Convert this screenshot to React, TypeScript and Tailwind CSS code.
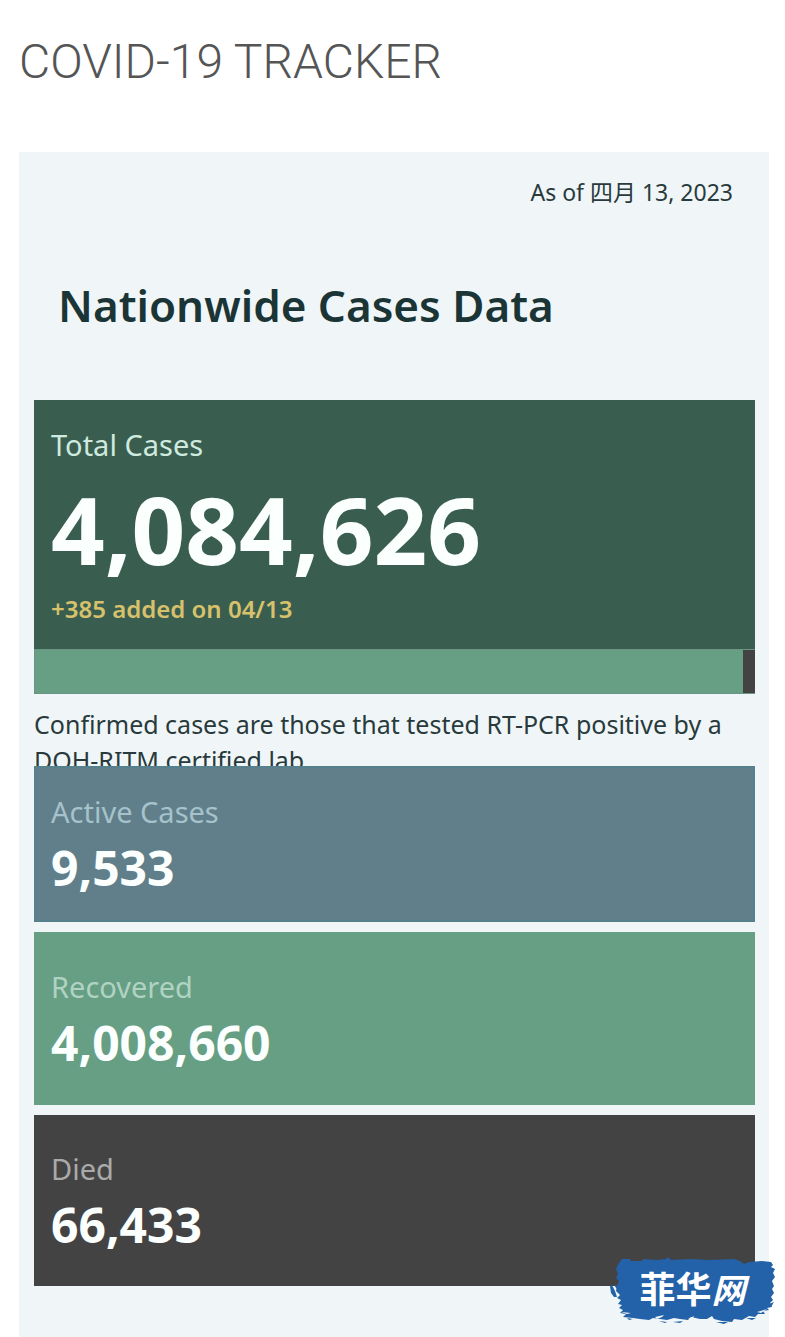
import React from 'react';

interface CaseCardProps {
  label: string;
  value: number;
  className: string;
  labelClassName: string;
}

const TOTAL = 4084626;
const ACTIVE = 9533;
const RECOVERED = 4008660;
const DIED = 66433;

const formatCount = (n: number) => n.toLocaleString('en-US');

function CaseCard({ label, value, className, labelClassName }: CaseCardProps) {
  return (
    <section className={className}>
      <h3 className={`text-[29px] leading-9 ${labelClassName}`}>{label}</h3>
      <p className="text-5xl leading-[76px] font-bold text-[#fbfffe]">{formatCount(value)}</p>
    </section>
  );
}

function CaseBar() {
  return (
    <div className="flex h-[45px] border border-r-0 border-[#6b9386] bg-[#669f84]">
      <div className="grow bg-[#669f84]" />
      <div className="bg-[#444344]" style={{ width: `${(DIED / TOTAL) * 100}%` }} />
    </div>
  );
}

function SiteBadge() {
  return (
    <div className="absolute right-[9px] bottom-[10px] flex h-[70px] w-[167px] items-center justify-center pb-2">
      <svg viewBox="0 0 167 70" className="absolute inset-0 h-full w-full" fill="#2361a8" aria-hidden="true">
        <path d="M10 6 L13 2 L21 2 L22 4 L33 4 L34 2 L48 3 L57 2 L59 0 L62 3 L82 2 L100 3 L125 2 L131 4 L135 7 L140 5 L153 4 L162 5 L164 8 L162 10 L166 12 L164 16 L166 20 L163 24 L165 29 L163 32 L165 36 L162 40 L164 43 L161 46 L163 50 L158 51 L160 53 L154 54 L156 57 L149 57 L146 60 L140 59 L133 63 L125 62 L123 65 L113 64 L105 62 L103 59 L98 62 L91 62 L82 60 L79 63 L71 62 L65 61 L58 63 L44 61 L40 63 L31 62 L24 61 L14 60 L17 57 L11 56 L14 53 L10 51 L13 48 L9 47 L12 43 L8 41 L11 38 L7 34 L8 29 L10 24 L7 21 L9 17 L7 12 Z" />
        <path d="M1 29 L3 28 L6 34 L8 40 L5 40 L2 36 Z M5 28 L9 29 L10 35 Z M50 64 L58 65 L56 66 Z M64 65 L74 64 L71 66 Z M107 65 L119 65 L115 67 Z M137 61 L147 61 L143 63 Z M18 61 L24 62 L20 63 Z M160 47 L165 45 L162 50 Z" />
        <path d="M12 55 L22 56 L18 57 Z M46 60 L55 58 L53 60 L48 62 Z M79 62 L85 59 L83 63 Z M148 55 L158 52 L152 56 Z" fill="#eff5f6" />
      </svg>
      <span className="relative font-['Noto_Sans_CJK_SC',sans-serif] text-4xl leading-10 font-bold text-white">
        菲华<span className="text-[34px] italic">网</span>
      </span>
    </div>
  );
}

export default function App() {
  return (
    <div className="relative flex min-h-screen flex-col bg-white pr-4 pl-[19px] font-['Noto_Sans','Noto_Sans_CJK_SC',sans-serif]">
      <h1 className="pt-8 pb-[60px] font-[Roboto,sans-serif] text-5xl leading-[60px] font-light text-[#555556]">
        COVID-19 TRACKER
      </h1>

      <main className="flex grow flex-col bg-[#f0f6f7] pr-[14px] pb-[50px] pl-[15px] text-[#293a3c]">
        <p className="pt-[22px] pr-[22px] text-right text-[23px] leading-9">As of 四月 13, 2023</p>
        <h2 className="px-6 pt-[62px] pb-[62px] text-[44px] leading-[66px] font-semibold text-[#1b3436]">
          Nationwide Cases Data
        </h2>

        <section className="bg-[#395e50] px-[17px] pt-[27px] pb-[22px]">
          <h3 className="text-[29px] leading-9 text-[#d0eadf]">Total Cases</h3>
          <p className="pt-1 text-[94px] leading-[124px] font-bold text-[#fbfffe]">{formatCount(TOTAL)}</p>
          <p className="text-2xl leading-9 font-semibold text-[#d8c16b]">+385 added on 04/13</p>
        </section>
        <CaseBar />

        <p className="h-[72px] overflow-hidden pt-3 text-[25px] leading-9">
          Confirmed cases are those that tested RT-PCR positive by a DOH-RITM certified lab.
        </p>

        <div className="flex flex-col gap-[10px]">
          <CaseCard
            label="Active Cases"
            value={ACTIVE}
            className="border-2 border-[#55808c] bg-[#607f8a] px-[15px] pt-[26px] pb-[14px]"
            labelClassName="text-[#a6c2ca]"
          />
          <CaseCard
            label="Recovered"
            value={RECOVERED}
            className="bg-[#669f84] px-[17px] pt-[37px] pb-6"
            labelClassName="text-[#b0d3c3]"
          />
          <CaseCard
            label="Died"
            value={DIED}
            className="bg-[#444344] px-[17px] pt-9 pb-[23px]"
            labelClassName="text-[#aaaaaa]"
          />
        </div>
      </main>

      <SiteBadge />
    </div>
  );
}
